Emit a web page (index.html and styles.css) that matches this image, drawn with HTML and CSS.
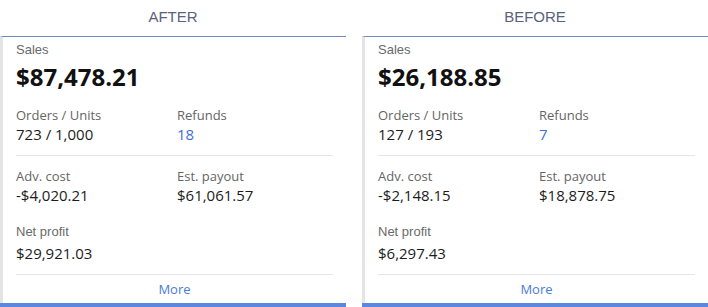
FILE: index.html
```html
<!DOCTYPE html>
<html>
<head>
<meta charset="utf-8">
<link rel="stylesheet" href="styles.css">
</head>
<body>
<div class="compare">
  <section class="panel">
    <div class="panel-title">AFTER</div>
    <div class="card">
      <div class="label label-arial sales">Sales</div>
      <div class="big">$87,478.21</div>
      <div class="pair pair-first">
        <div><div class="label">Orders / Units</div><div class="value">723 / 1,000</div></div>
        <div><div class="label">Refunds</div><div class="value link">18</div></div>
      </div>
      <div class="divider"></div>
      <div class="pair pair-second">
        <div><div class="label">Adv. cost</div><div class="value">-$4,020.21</div></div>
        <div><div class="label">Est. payout</div><div class="value">$61,061.57</div></div>
      </div>
      <div class="label label-arial net">Net profit</div>
      <div class="value net-value">$29,921.03</div>
      <div class="divider divider-bottom"></div>
      <div class="more">More</div>
    </div>
    <div class="bar"></div>
  </section>
  <section class="panel">
    <div class="panel-title">BEFORE</div>
    <div class="card">
      <div class="label label-arial sales">Sales</div>
      <div class="big">$26,188.85</div>
      <div class="pair pair-first">
        <div><div class="label">Orders / Units</div><div class="value">127 / 193</div></div>
        <div><div class="label">Refunds</div><div class="value link">7</div></div>
      </div>
      <div class="divider"></div>
      <div class="pair pair-second">
        <div><div class="label">Adv. cost</div><div class="value">-$2,148.15</div></div>
        <div><div class="label">Est. payout</div><div class="value">$18,878.75</div></div>
      </div>
      <div class="label label-arial net">Net profit</div>
      <div class="value net-value">$6,297.43</div>
      <div class="divider divider-bottom"></div>
      <div class="more">More</div>
    </div>
    <div class="bar"></div>
  </section>
</div>
</body>
</html>
```

FILE: styles.css
```css
* { box-sizing: border-box; }
html, body { margin: 0; padding: 0; background: #ffffff; }
body { font-family: "Open Sans", "Noto Sans", sans-serif; color: #1e1e1e; }

.compare {
  display: flex;
  gap: 16px;
  width: 708px;
}

.panel {
  width: 346px;
  display: flex;
  flex-direction: column;
}

.panel-title {
  height: 36px;
  line-height: 33px;
  text-align: center;
  font-family: "Liberation Sans", Arial, sans-serif;
  font-size: 15px;
  color: #58627c;
}

.card {
  border-top: 1px solid #7189c2;
  border-left: 3px solid #e4e4e4;
  padding: 4px 13px 5px 13px;
  display: flex;
  flex-direction: column;
}

.label {
  font-size: 13px;
  line-height: 18px;
  color: #656565;
}

.label-arial {
  font-family: "Liberation Sans", Arial, sans-serif;
  line-height: 15px;
  color: #6a6a6a;
}

.sales { margin-top: 1px; }

.big {
  margin-top: 5px;
  font-size: 24px;
  font-weight: 700;
  line-height: 30px;
  color: #111111;
}

.value {
  font-size: 15px;
  line-height: 20px;
  color: #1c1c1c;
}

.link { color: #3f6fd6; }

.pair {
  display: grid;
  grid-template-columns: 161px 1fr;
}

.pair-first { margin-top: 14px; }
.pair-second { margin-top: 11px; }

.divider {
  height: 1px;
  background: #e6e6e6;
  margin-top: 11px;
}

.net { margin-top: 19px; }
.net-value { margin-top: 4px; }

.divider-bottom { margin-top: 11px; }

.more {
  margin-top: 5px;
  text-align: center;
  font-size: 13px;
  line-height: 18px;
  color: #4a7bd8;
}

.bar {
  height: 5px;
  background: #5b87e0;
}
```
